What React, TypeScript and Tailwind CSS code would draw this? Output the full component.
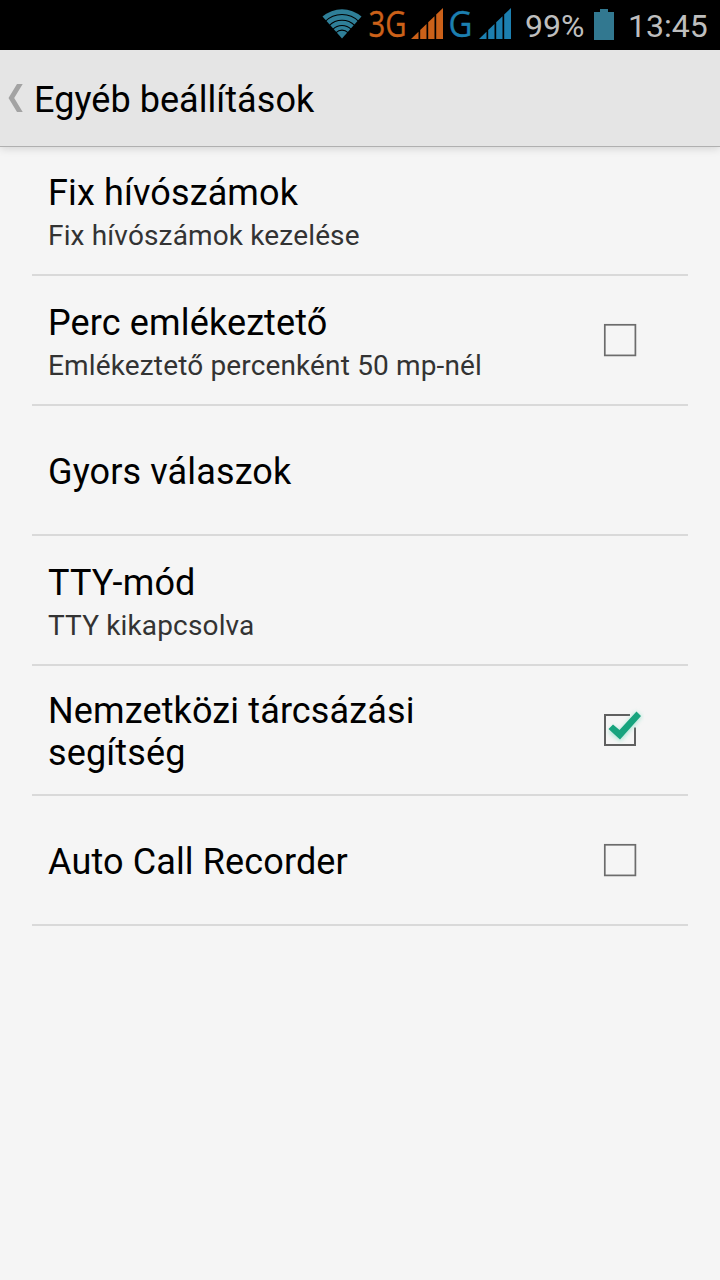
import React from 'react';

interface Setting {
  title: string;
  summary?: string;
  checked?: boolean;
}

const settings: Setting[] = [
  { title: 'Fix hívószámok', summary: 'Fix hívószámok kezelése' },
  {
    title: 'Perc emlékeztető',
    summary: 'Emlékeztető percenként 50 mp-nél',
    checked: false,
  },
  { title: 'Gyors válaszok' },
  { title: 'TTY-mód', summary: 'TTY kikapcsolva' },
  { title: 'Nemzetközi tárcsázási segítség', checked: true },
  { title: 'Auto Call Recorder', checked: false },
];

const WifiIcon: React.FC = () => (
  <svg width="40" height="31" viewBox="0 0 40 31" fill="none" stroke="#000" strokeWidth="1.1">
    <path d="M20 30.5L0.5 8.5A30 30 0 0 1 39.5 8.5Z" fill="#2f7f98" stroke="none" />
    <circle cx="20" cy="30.5" r="24" />
    <circle cx="20" cy="30.5" r="18.2" />
    <circle cx="20" cy="30.5" r="13" />
    <circle cx="20" cy="30.5" r="8.4" />
  </svg>
);

const SignalIcon: React.FC<{ className: string }> = ({ className }) => (
  <svg width="32" height="31" viewBox="0 0 32 31" fill="currentColor" className={className}>
    <path d="M0 31L7.5 23.7V31Z" />
    <path d="M9.2 22L15.5 15.9V31H9.2Z" />
    <path d="M17.2 14.3L23.5 8.2V31H17.2Z" />
    <path d="M25.2 6.5L32 0V31H25.2Z" />
  </svg>
);

const NetworkLabel: React.FC<{ label: string; width: number; className: string }> = ({
  label,
  width,
  className,
}) => (
  <svg width={width + 4} height="50" fill="currentColor" className={className}>
    <text
      x="0.5"
      y="36.5"
      textLength={width}
      lengthAdjust="spacingAndGlyphs"
      stroke="currentColor"
      strokeWidth="0.4"
      className="font-['Open_Sans',sans-serif] text-[36px]"
    >
      {label}
    </text>
  </svg>
);

const StatusBar: React.FC = () => (
  <div className="flex h-[50px] items-start bg-black pl-[322px] text-[32px] leading-none text-[#bebebe]">
    <div className="mt-2">
      <WifiIcon />
    </div>
    <NetworkLabel label="3G" width={38} className="ml-1.5 text-[#cc6119]" />
    <SignalIcon className="mt-2 ml-px text-[#cc6119]" />
    <NetworkLabel label="G" width={24} className="ml-[5px] text-[#1c7fb0]" />
    <SignalIcon className="mt-2 ml-[3px] text-[#1c7fb0]" />
    <span className="mt-2.5 ml-3.5 w-[62px]">99%</span>
    <svg width="20" height="31" viewBox="0 0 20 31" fill="#327890" className="mt-[9px] ml-[7px]">
      <path d="M6 0H14V3H20V31H0V3H6Z" />
    </svg>
    <span className="mt-2.5 ml-3.5">13:45</span>
  </div>
);

const Header: React.FC = () => (
  <div className="relative z-10 flex h-[97px] items-center border-b border-[#b0b0b0] bg-[#e5e5e5] pl-2 shadow-[0_2px_8px_rgba(0,0,0,0.13)]">
    <svg width="15" height="28" viewBox="0 0 15 28" fill="#a3a3a3">
      <path d="M9 0H14.7L6.2 14L14.7 28H9L0.5 14Z" />
    </svg>
    <h1 className="mt-1 ml-[11px] text-[36px] leading-[42px] tracking-[0.05px]">
      Egyéb beállítások
    </h1>
  </div>
);

const Checkbox: React.FC<{ checked: boolean }> = ({ checked }) => (
  <svg
    width="48"
    height="48"
    viewBox="0 0 48 48"
    fill="none"
    role="checkbox"
    aria-checked={checked}
  >
    {checked ? (
      <>
        <path d="M34 9H9V39H39V21.5" stroke="#606060" strokeWidth="2" />
        <path
          d="M15 23L24 30L43 8"
          stroke="#8fe0c8"
          strokeWidth="8"
          className="opacity-70 blur-[2px]"
        />
        <path d="M12.5 23L17 18.5L23.5 24L40.5 5.5L45 10L24 33.5Z" fill="#17a47e" />
      </>
    ) : (
      <rect x="8.8" y="8.8" width="30.6" height="30.6" stroke="#6c6c6c" strokeWidth="1.7" />
    )}
  </svg>
);

const SettingRow: React.FC<{ setting: Setting }> = ({ setting }) => (
  <li className="flex h-[130px] items-center justify-between border-b-2 border-[#d9d9d9] pr-11 pl-4">
    <div className="mt-1 max-w-[460px] tracking-[0.13px]">
      <div className="text-[36px] leading-[42px]">{setting.title}</div>
      {setting.summary && (
        <div className="mt-1.5 text-[28px] leading-8 tracking-[0.15px] text-[#333]">
          {setting.summary}
        </div>
      )}
    </div>
    {setting.checked !== undefined && <Checkbox checked={setting.checked} />}
  </li>
);

export default function App() {
  return (
    <div className="h-[1280px] w-[720px] overflow-hidden bg-[#f5f5f5] font-[Roboto,sans-serif] text-black">
      <StatusBar />
      <Header />
      <ul className="-mt-px px-8">
        {settings.map((setting) => (
          <SettingRow key={setting.title} setting={setting} />
        ))}
      </ul>
    </div>
  );
}
